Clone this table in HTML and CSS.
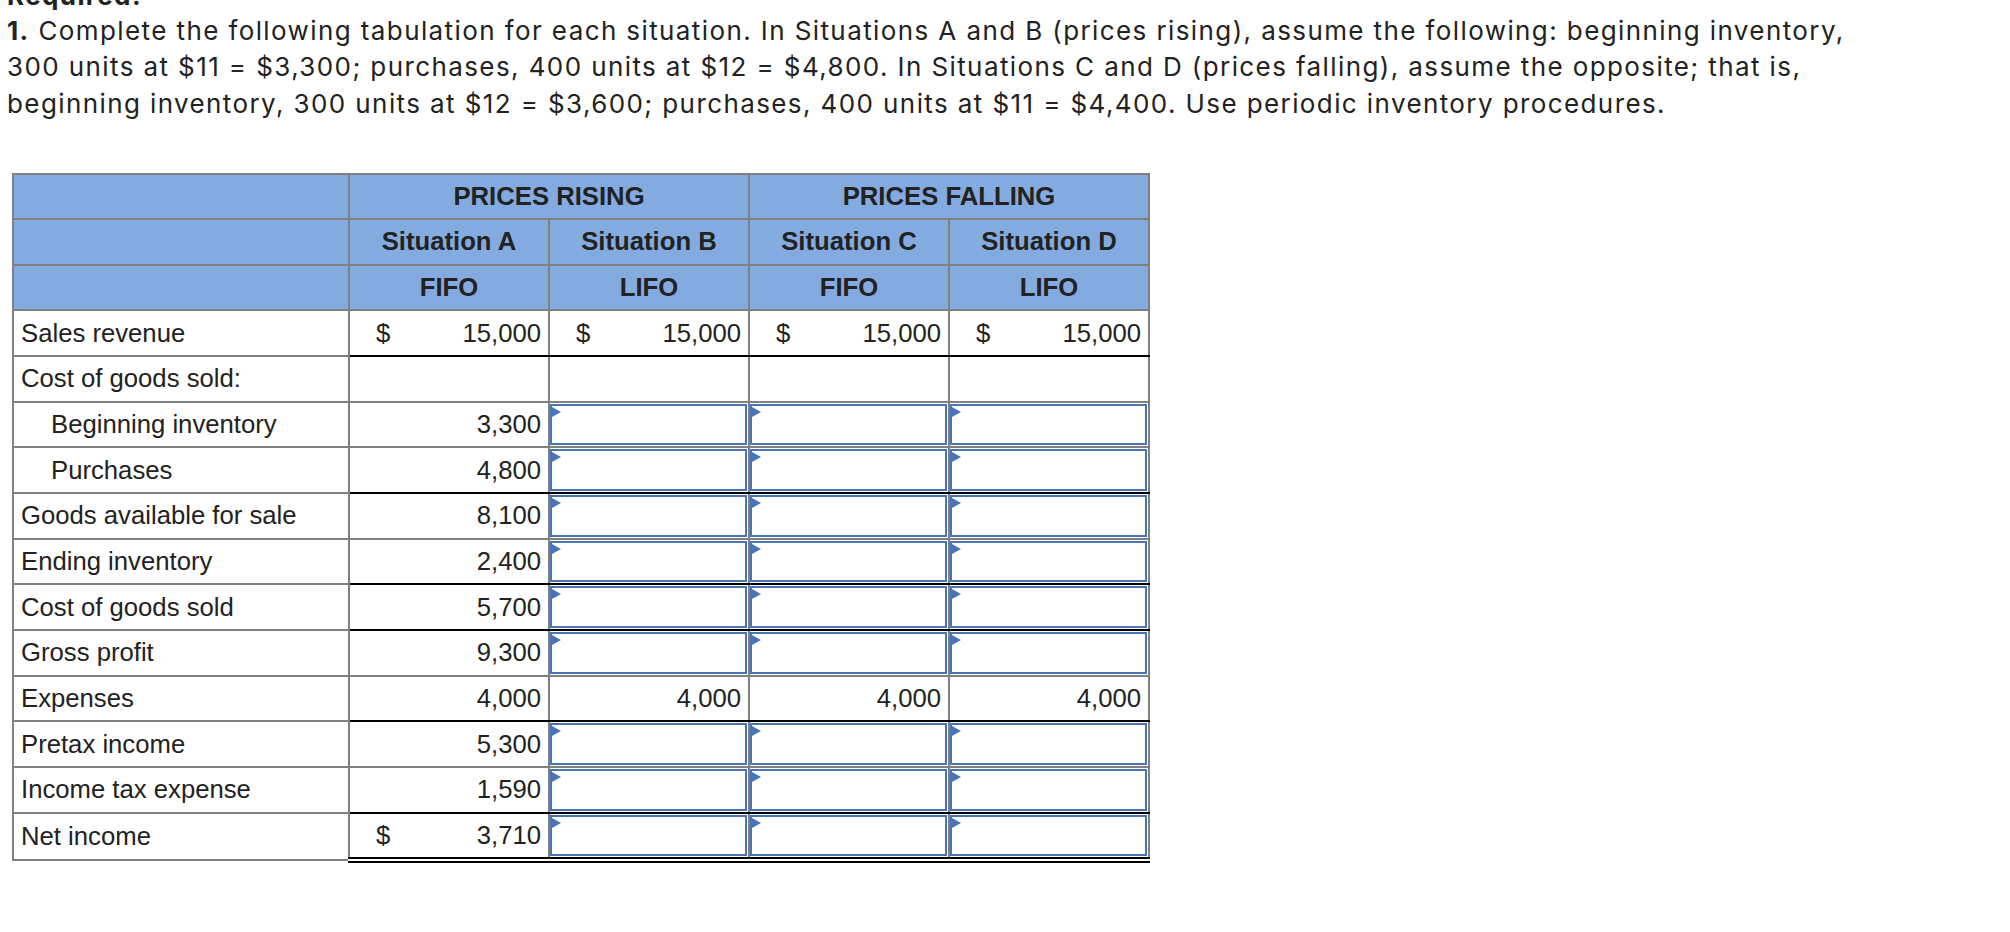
FILE: index.html
```html
<!DOCTYPE html>
<html lang="en">
<head>
<meta charset="utf-8">
<title>Inventory tabulation</title>
<link rel="stylesheet" href="styles.css">
</head>
<body>
<div class="page">
  <h3 class="req">Required:</h3>
  <p class="intro"><b>1.</b> Complete the following tabulation for each situation. In Situations A and B (prices rising), assume the following: beginning inventory,<br>300 units at $11 = $3,300; purchases, 400 units at $12 = $4,800. In Situations C and D (prices falling), assume the opposite; that is,<br>beginning inventory, 300 units at $12 = $3,600; purchases, 400 units at $11 = $4,400. Use periodic inventory procedures.</p>

  <table class="tab">
    <colgroup><col class="c-label"><col class="c-num"><col class="c-num"><col class="c-num"><col class="c-num"></colgroup>
    <thead>
      <tr><th></th><th colspan="2">PRICES RISING</th><th colspan="2">PRICES FALLING</th></tr>
      <tr><th></th><th>Situation A</th><th>Situation B</th><th>Situation C</th><th>Situation D</th></tr>
      <tr><th></th><th>FIFO</th><th>LIFO</th><th>FIFO</th><th>LIFO</th></tr>
    </thead>
    <tbody>
      <tr>
        <td class="lbl">Sales revenue</td>
        <td class="under"><div class="amt"><span>$</span><span>15,000</span></div></td>
        <td class="under"><div class="amt"><span>$</span><span>15,000</span></div></td>
        <td class="under"><div class="amt"><span>$</span><span>15,000</span></div></td>
        <td class="under"><div class="amt"><span>$</span><span>15,000</span></div></td>
      </tr>
      <tr>
        <td class="lbl">Cost of goods sold:</td>
        <td></td><td></td><td></td><td></td>
      </tr>
      <tr>
        <td class="lbl ind">Beginning inventory</td>
        <td class="num">3,300</td>
        <td class="fld"><div class="box"><span class="flag"></span></div></td>
        <td class="fld"><div class="box"><span class="flag"></span></div></td>
        <td class="fld"><div class="box"><span class="flag"></span></div></td>
      </tr>
      <tr>
        <td class="lbl ind">Purchases</td>
        <td class="num under">4,800</td>
        <td class="fld under"><div class="box"><span class="flag"></span></div></td>
        <td class="fld under"><div class="box"><span class="flag"></span></div></td>
        <td class="fld under"><div class="box"><span class="flag"></span></div></td>
      </tr>
      <tr>
        <td class="lbl">Goods available for sale</td>
        <td class="num">8,100</td>
        <td class="fld"><div class="box"><span class="flag"></span></div></td>
        <td class="fld"><div class="box"><span class="flag"></span></div></td>
        <td class="fld"><div class="box"><span class="flag"></span></div></td>
      </tr>
      <tr>
        <td class="lbl">Ending inventory</td>
        <td class="num under">2,400</td>
        <td class="fld under"><div class="box"><span class="flag"></span></div></td>
        <td class="fld under"><div class="box"><span class="flag"></span></div></td>
        <td class="fld under"><div class="box"><span class="flag"></span></div></td>
      </tr>
      <tr>
        <td class="lbl">Cost of goods sold</td>
        <td class="num under">5,700</td>
        <td class="fld under"><div class="box"><span class="flag"></span></div></td>
        <td class="fld under"><div class="box"><span class="flag"></span></div></td>
        <td class="fld under"><div class="box"><span class="flag"></span></div></td>
      </tr>
      <tr>
        <td class="lbl">Gross profit</td>
        <td class="num">9,300</td>
        <td class="fld"><div class="box"><span class="flag"></span></div></td>
        <td class="fld"><div class="box"><span class="flag"></span></div></td>
        <td class="fld"><div class="box"><span class="flag"></span></div></td>
      </tr>
      <tr>
        <td class="lbl">Expenses</td>
        <td class="num under">4,000</td>
        <td class="num under">4,000</td>
        <td class="num under">4,000</td>
        <td class="num under">4,000</td>
      </tr>
      <tr>
        <td class="lbl">Pretax income</td>
        <td class="num">5,300</td>
        <td class="fld"><div class="box"><span class="flag"></span></div></td>
        <td class="fld"><div class="box"><span class="flag"></span></div></td>
        <td class="fld"><div class="box"><span class="flag"></span></div></td>
      </tr>
      <tr>
        <td class="lbl">Income tax expense</td>
        <td class="num under">1,590</td>
        <td class="fld under"><div class="box"><span class="flag"></span></div></td>
        <td class="fld under"><div class="box"><span class="flag"></span></div></td>
        <td class="fld under"><div class="box"><span class="flag"></span></div></td>
      </tr>
      <tr>
        <td class="lbl">Net income</td>
        <td class="dbl"><div class="amt"><span>$</span><span>3,710</span></div></td>
        <td class="fld dbl"><div class="box"><span class="flag"></span></div></td>
        <td class="fld dbl"><div class="box"><span class="flag"></span></div></td>
        <td class="fld dbl"><div class="box"><span class="flag"></span></div></td>
      </tr>
    </tbody>
  </table>
</div>
</body>
</html>
```

FILE: styles.css
```css
* { box-sizing: border-box; }

body {
  margin: 0;
  background: #ffffff;
  color: #222222;
}

.page {
  padding: 0 0 0 7px;
}

.req {
  font-family: Inter, Lato, sans-serif;
  font-weight: 700;
  font-size: 26px;
  letter-spacing: 1.4px;
  line-height: 32.5px;
  margin: -20px 0 0 0;
}

.intro {
  font-family: Inter, Lato, sans-serif;
  font-size: 26px;
  letter-spacing: 1.4px;
  line-height: 36.5px;
  margin: 0;
  white-space: nowrap;
}

.intro b { font-weight: 700; }

.tab {
  border-collapse: collapse;
  table-layout: fixed;
  width: 1136px;
  margin: 50.5px 0 0 5px;
  font-family: "Liberation Sans", Arial, sans-serif;
  font-size: 25.7px;
  color: #222222;
}

.c-label { width: 336px; }
.c-num { width: 200px; }

.tab th,
.tab td {
  border: 2px solid #808080;
  height: 45.66px;
  padding: 0;
  vertical-align: middle;
}

.tab th {
  background: #84abe0;
  font-weight: 700;
  text-align: center;
}

.tab .lbl { padding-left: 7px; }
.tab .ind { padding-left: 37px; }

.amt {
  display: flex;
  justify-content: space-between;
  padding: 0 7px 0 26px;
}

.tab .num {
  text-align: right;
  padding-right: 7px;
}

.tab .under { border-bottom-color: #000000; }

.tab .dbl { border-bottom: 6px double #000000; }

.box {
  position: relative;
  height: 41.66px;
  margin: 1px 1px 1px 0;
  border: 2px solid #4a74b8;
  background: #ffffff;
}

.flag {
  position: absolute;
  left: 0;
  top: 1px;
  width: 0;
  height: 0;
  border-left: 9px solid #4a74b8;
  border-top: 5px solid transparent;
  border-bottom: 5px solid transparent;
}
```
